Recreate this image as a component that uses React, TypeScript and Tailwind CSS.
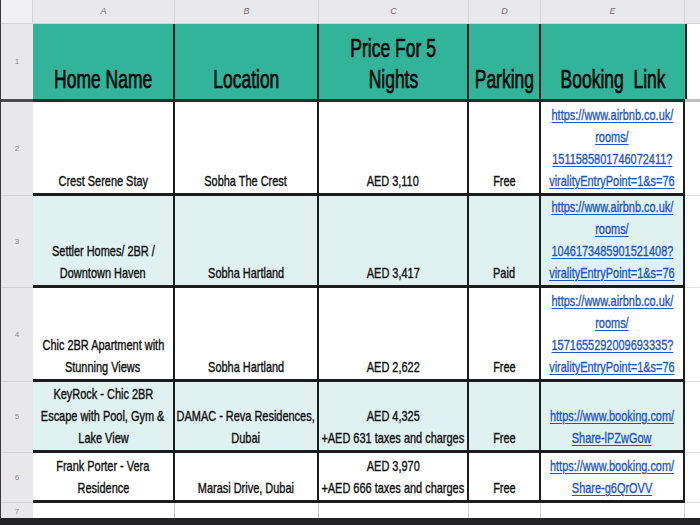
import React from "react";

type Row = {
  n: number;
  bg: string;
  cells: string[][];
  link: string[];
};

const rows: Row[] = [
  {
    n: 2,
    bg: "bg-white",
    cells: [["Crest Serene Stay"], ["Sobha The Crest"], ["AED 3,110"], ["Free"]],
    link: ["https://www.airbnb.co.uk/", "rooms/", "1511585801746072411?", "viralityEntryPoint=1&s=76"],
  },
  {
    n: 3,
    bg: "bg-[#dff1f1]",
    cells: [["Settler Homes/ 2BR /", "Downtown Haven"], ["Sobha Hartland"], ["AED 3,417"], ["Paid"]],
    link: ["https://www.airbnb.co.uk/", "rooms/", "1046173485901521408?", "viralityEntryPoint=1&s=76"],
  },
  {
    n: 4,
    bg: "bg-white",
    cells: [["Chic 2BR Apartment with", "Stunning Views"], ["Sobha Hartland"], ["AED 2,622"], ["Free"]],
    link: ["https://www.airbnb.co.uk/", "rooms/", "1571655292009693335?", "viralityEntryPoint=1&s=76"],
  },
  {
    n: 5,
    bg: "bg-[#dff1f1]",
    cells: [
      ["KeyRock - Chic 2BR", "Escape with Pool, Gym &", "Lake View"],
      ["DAMAC - Reva Residences,", "Dubai"],
      ["AED 4,325", "+AED 631 taxes and charges"],
      ["Free"],
    ],
    link: ["https://www.booking.com/", "Share-lPZwGow"],
  },
  {
    n: 6,
    bg: "bg-white",
    cells: [
      ["Frank Porter - Vera", "Residence"],
      ["Marasi Drive, Dubai"],
      ["AED 3,970", "+AED 666 taxes and charges"],
      ["Free"],
    ],
    link: ["https://www.booking.com/", "Share-g6QrOVV"],
  },
];

const headers: string[][] = [["Home Name"], ["Location"], ["Price For 5", "Nights"], ["Parking"], ["Booking  Link"]];

function Lines({ lines, link }: { lines: string[]; link?: boolean }) {
  return (
    <div className="flex h-full flex-col items-center justify-end pb-[1px]">
      {lines.map((l, i) => (
        <div
          key={i}
          className={
            link
              ? "whitespace-pre text-[15px] leading-[22px] scale-x-[0.73] text-[#1b55c6] underline underline-offset-2 [-webkit-text-stroke:0.35px_#1b55c6]"
              : "whitespace-pre text-[15px] leading-[22px] scale-x-[0.73] text-[#111] [-webkit-text-stroke:0.4px_#111]"
          }
        >
          {l}
        </div>
      ))}
    </div>
  );
}

export default function App() {
  return (
    <div className="w-[700px] h-[525px] overflow-hidden bg-white font-['Liberation_Sans',Arial,sans-serif] flex flex-col">
      <div className="h-[518px] border-l border-[#3a3a3e] grid grid-cols-[32px_142px_144px_150px_72px_144px_1fr] grid-rows-[24px_75px_3px_94px_92px_94px_71px_50px_1fr]">
        {/* column letters */}
        <div className="bg-[#f1f1f3] border-b border-r border-[#d6d6da]" />
        {["A", "B", "C", "D", "E"].map((c) => (
          <div
            key={c}
            className="bg-[#e9e9ec] border-b border-r border-[#d6d6da] flex items-center justify-center text-[9px] italic text-[#6f6f75]"
          >
            {c}
          </div>
        ))}
        <div className="bg-[#e9e9ec] border-b border-[#d6d6da]" />

        {/* header row 1 */}
        <div className="bg-[#e8e8eb] flex items-center justify-center text-[8px] text-[#8a8a90]">1</div>
        {headers.map((h, i) => (
          <div
            key={i}
            className={
              i === 4
                ? "bg-[#32b49b] flex flex-col items-center justify-end pb-[4px]"
                : "bg-[#32b49b] border-r-2 border-[#1c1c1c] flex flex-col items-center justify-end pb-[4px]"
            }
          >
            {h.map((l, j) => (
              <div
                key={j}
                className="whitespace-pre text-[25px] leading-[31px] scale-x-[0.7] text-[#0a0a0a] [-webkit-text-stroke:0.7px_#0a0a0a]"
              >
                {l}
              </div>
            ))}
          </div>
        ))}
        <div className="bg-white border-l-2 border-[#1c1c1c]" />

        {/* frozen separator */}
        <div className="bg-[#4a4a4e]" />
        <div className="bg-[#2a2a2c] col-span-5" />
        <div className="bg-[#bdbdc0]" />

        {/* data rows */}
        {rows.map((r) => (
          <React.Fragment key={r.n}>
            <div className="bg-[#e8e8eb] border-b border-[#d4d4d8] flex items-center justify-center text-[8px] text-[#8a8a90]">
              {r.n}
            </div>
            {r.cells.map((c, i) => (
              <div key={i} className={`${r.bg} border-r-2 border-b-[3px] border-[#1c1c1c]`}>
                <Lines lines={c} />
              </div>
            ))}
            <div className={`${r.bg} border-r-2 border-b-[3px] border-[#1c1c1c]`}>
              <Lines lines={r.link} link />
            </div>
            <div className="bg-white border-b border-[#e2e2e4]" />
          </React.Fragment>
        ))}

        {/* row 7 */}
        <div className="bg-[#e8e8eb] flex items-start justify-center pt-[3px] text-[8px] text-[#8a8a90]">7</div>
        <div className="bg-white border-r border-[#c8c8cc]" />
        <div className="bg-white border-r border-[#c8c8cc]" />
        <div className="bg-white border-r border-[#d8d8dc]" />
        <div className="bg-white border-r border-[#d8d8dc]" />
        <div className="bg-white border-r border-[#d8d8dc]" />
        <div className="bg-white" />
      </div>
      <div className="flex-1 bg-[#232326]" />
    </div>
  );
}
